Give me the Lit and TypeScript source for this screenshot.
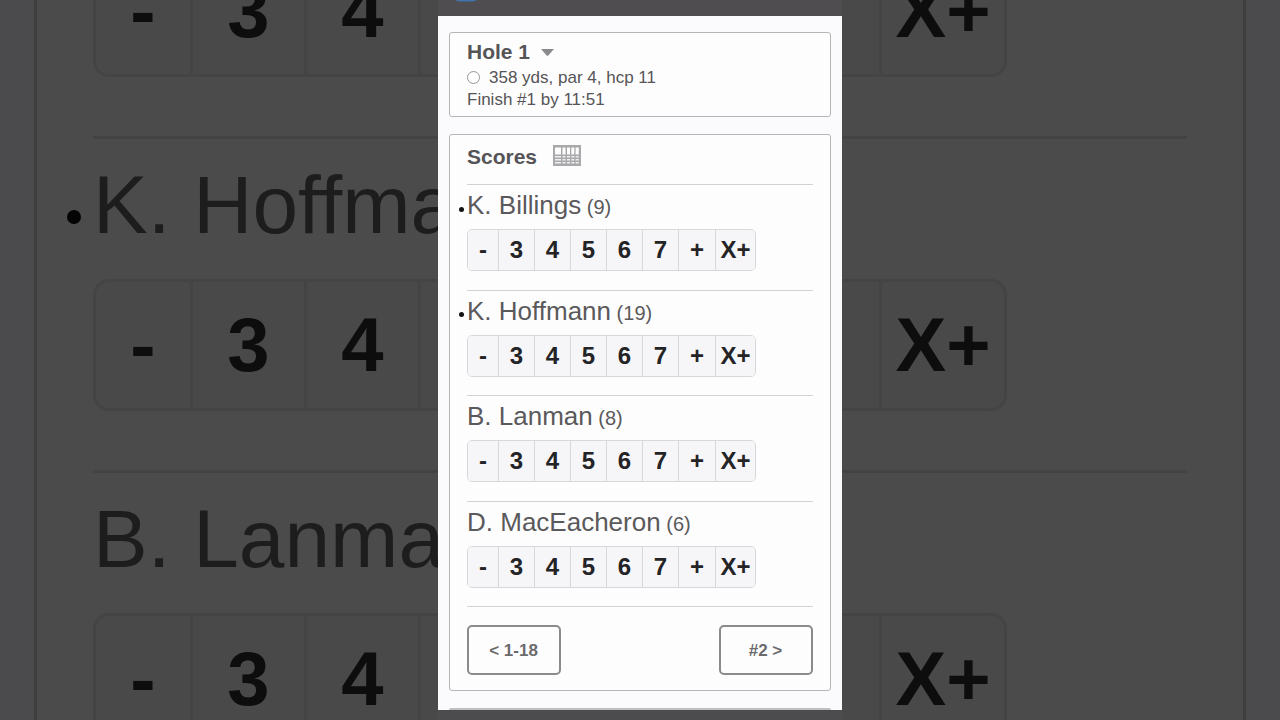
import { LitElement, html, css } from "lit";
import { customElement, property } from "lit/decorators.js";

interface Player {
  name: string;
  handicap: number;
  stroke: boolean;
}

const PLAYERS: Player[] = [
  { name: "K. Billings", handicap: 9, stroke: true },
  { name: "K. Hoffmann", handicap: 19, stroke: true },
  { name: "B. Lanman", handicap: 8, stroke: false },
  { name: "D. MacEacheron", handicap: 6, stroke: false },
];

const KEYS = ["-", "3", "4", "5", "6", "7", "+", "X+"];

@customElement("player-row")
export class PlayerRow extends LitElement {
  @property({ attribute: false }) player!: Player;

  static styles = css`
    :host {
      display: block;
      box-sizing: border-box;
      border-top: 1px solid #d2d1d3;
      padding: 4px 0 12px;
    }
    .name {
      display: flex;
      align-items: baseline;
      margin: 0 0 6px;
      font-size: 26px;
      line-height: 32px;
      font-weight: 400;
      color: #5a595b;
      white-space: pre;
    }
    .handicap {
      font-size: 20px;
    }
    .dot {
      flex: none;
      align-self: center;
      width: 5px;
      height: 5px;
      margin: 6px 3px 0 -8px;
      border-radius: 50%;
      background: #111;
    }
    .keys {
      display: inline-grid;
      grid-template-columns: 30px repeat(5, 36px) 37px 40px;
      border: 1px solid #d8d7da;
      border-radius: 5px;
      overflow: hidden;
      box-sizing: border-box;
      vertical-align: top;
    }
    .key {
      height: 40px;
      padding: 0;
      border: 0;
      border-left: 1px solid #d8d7da;
      background: #f6f5f8;
      color: #242325;
      font: bold 24px/40px "Liberation Sans", Arial, sans-serif;
      text-align: center;
    }
    .key:first-child {
      border-left: 0;
    }
  `;

  render() {
    const p = this.player;
    return html`
      <h3 class="name">${p.stroke ? html`<span class="dot"></span>` : ""}<span>${p.name}</span><span class="handicap"> (${p.handicap})</span></h3>
      <div class="keys" role="group" aria-label=${p.name}>
        ${KEYS.map((k) => html`<button class="key" type="button">${k}</button>`)}
      </div>
    `;
  }
}

@customElement("app-root")
export class AppRoot extends LitElement {
  static styles = css`
    :host {
      display: block;
      position: relative;
      min-height: 100vh;
      overflow: hidden;
      background: #4b4a4d;
      font-family: "Liberation Sans", Arial, sans-serif;
    }

    /* dimmed enlargement behind the phone column */
    .backdrop {
      position: absolute;
      inset: 0;
      overflow: hidden;
      display: flex;
      flex-direction: column;
      margin: 0 34px;
      padding: 0 56px;
      border: solid #3e3e3f;
      border-width: 0 3px;
      background: #4b4b4b;
    }
    .big-row {
      flex: none;
      box-sizing: border-box;
      height: 334px;
      padding-top: 16px;
      border-top: 3px solid #434343;
    }
    .big-row:first-child {
      margin-top: -198px;
    }
    .big-name {
      display: flex;
      align-items: center;
      margin-bottom: 24px;
      font-size: 82px;
      line-height: 100px;
      color: #1d1d1d;
      white-space: nowrap;
    }
    .big-dot {
      flex: none;
      width: 14px;
      height: 14px;
      margin: 24px 12px 0 -26px;
      border-radius: 50%;
      background: #040404;
    }
    .big-keys {
      display: inline-grid;
      grid-template-columns: 94px repeat(5, 114px) 119px 125px;
      border: 3px solid #444;
      border-radius: 16px;
      background: #494949;
    }
    .big-key {
      box-sizing: border-box;
      height: 126px;
      padding-top: 4px;
      border-left: 3px solid #444;
      font-size: 76px;
      font-weight: 700;
      line-height: 118px;
      text-align: center;
      color: #0d0d0d;
    }
    .big-key:first-child {
      border-left: 0;
    }

    .phone {
      position: relative;
      display: flex;
      flex-direction: column;
      box-sizing: border-box;
      max-width: 404px;
      min-height: 100vh;
      margin: 0 auto;
      background: #4c4b4d;
    }
    .topbar {
      flex: none;
      height: 16px;
      background: #4f4d50;
    }
    .topbar-icon {
      display: block;
      margin-left: 17px;
    }
    .page {
      flex: 1;
      display: flex;
      flex-direction: column;
      gap: 17px;
      margin-bottom: 10px;
      padding: 16px 11px 0;
      background: #fbfafd;
    }
    .card {
      border: 1px solid #b5b4b7;
      border-radius: 3px;
      background: #fefdfe;
      padding: 0 17px;
      color: #555456;
    }
    .hole {
      padding-top: 7px;
      padding-bottom: 5px;
      font-size: 17px;
      line-height: 22px;
    }
    .hole-title {
      display: flex;
      align-items: center;
      gap: 10px;
      margin-bottom: 3px;
    }
    .hole-select {
      appearance: none;
      border: 0;
      margin: 0;
      padding: 0;
      background: none;
      color: #555456;
      font: bold 21px/24px "Liberation Sans", Arial, sans-serif;
    }
    .line {
      display: flex;
      align-items: center;
      gap: 9px;
      margin: 0;
    }
    .tee {
      box-sizing: border-box;
      width: 13px;
      height: 13px;
      margin-bottom: 2px;
      border: 1px solid #969597;
      border-radius: 50%;
      background: #fff;
    }
    .scores {
      flex: 1;
      display: flex;
      flex-direction: column;
    }
    .scores-head {
      display: flex;
      align-items: flex-start;
      gap: 16px;
      padding: 10px 0 15px;
    }
    .scores-title {
      margin: 0;
      font-size: 21px;
      line-height: 24px;
    }
    .card-button {
      display: block;
      padding: 0;
      border: 0;
      margin: 0;
      background: none;
    }
    .card-icon {
      display: block;
    }
    .players {
      flex: 1;
      display: grid;
      grid-auto-rows: 1fr;
    }
    .nav {
      display: flex;
      justify-content: space-between;
      border-top: 1px solid #d2d1d3;
      padding: 18px 0 15px;
    }
    .nav-button {
      width: 94px;
      height: 50px;
      padding: 2px 1px 0 0;
      border: 2px solid #8b8a8c;
      border-radius: 5px;
      background: #fefdfe;
      color: #6b6a6c;
      font: bold 17px/22px "Liberation Sans", Arial, sans-serif;
    }
    .next-card {
      flex: none;
      height: 2px;
      border-radius: 3px 3px 0 0;
      background: #bfbec1;
    }
  `;

  private bigRow(p: Player) {
    return html`
      <div class="big-row">
        <div class="big-name">${p.stroke ? html`<span class="big-dot"></span>` : ""}${p.name}</div>
        <div class="big-keys">${KEYS.map((k) => html`<div class="big-key">${k}</div>`)}</div>
      </div>
    `;
  }

  render() {
    return html`
      <div class="backdrop" aria-hidden="true">${PLAYERS.slice(0, 3).map((p) => this.bigRow(p))}</div>
      <div class="phone">
        <header class="topbar">
          <svg class="topbar-icon" width="22" height="2" viewBox="0 0 22 2"><path d="M0 0H22Q19 1.600 16 1.600H6Q3 1.600 0 0Z" fill="#3f74ad" /></svg>
        </header>
        <main class="page">
          <section class="card hole">
            <div class="hole-title">
              <select class="hole-select" aria-label="Hole"><option>Hole 1</option></select>
              <svg width="13" height="7" viewBox="0 0 13 7"><path d="M0 0H13L7.300 6.500Q6.500 7.200 5.700 6.500Z" fill="#8a898b" /></svg>
            </div>
            <p class="line"><span class="tee"></span>358 yds, par 4, hcp 11</p>
            <p class="line">Finish #1 by 11:51</p>
          </section>
          <section class="card scores">
            <div class="scores-head">
              <h2 class="scores-title">Scores</h2>
              <button class="card-button" type="button" aria-label="Scorecard">
                <svg class="card-icon" width="28" height="21" viewBox="0 0 28 21">
                  <rect width="28" height="21" fill="#a9a8aa" />
                  <path fill="#fefdfe" d="M2 2.500h6v7h-6zM9.500 2.500h3v7h-3zM14 2.500h3v7h-3zM18.300 2.500h3v7h-3zM22.600 2.500h3.200v7h-3.200z" />
                  <path fill="#eeedef" d="M2 11h6v1.600h-6zM9.500 11h3v1.600h-3zM14 11h3v1.600h-3zM18.300 11h3v1.600h-3zM22.600 11h3.200v1.600h-3.200z" />
                  <path fill="#eeedef" d="M2 14h6v1.600h-6zM9.500 14h3v1.600h-3zM14 14h3v1.600h-3zM18.300 14h3v1.600h-3zM22.600 14h3.200v1.600h-3.200z" />
                  <path fill="#eeedef" d="M2 17h6v1.600h-6zM9.500 17h3v1.600h-3zM14 17h3v1.600h-3zM18.300 17h3v1.600h-3zM22.600 17h3.200v1.600h-3.200z" />
                </svg>
              </button>
            </div>
            <div class="players">${PLAYERS.map((p) => html`<player-row .player=${p}></player-row>`)}</div>
            <nav class="nav">
              <button class="nav-button" type="button">&lt; 1-18</button>
              <button class="nav-button" type="button">#2 &gt;</button>
            </nav>
          </section>
          <div class="next-card"></div>
        </main>
      </div>
    `;
  }
}
